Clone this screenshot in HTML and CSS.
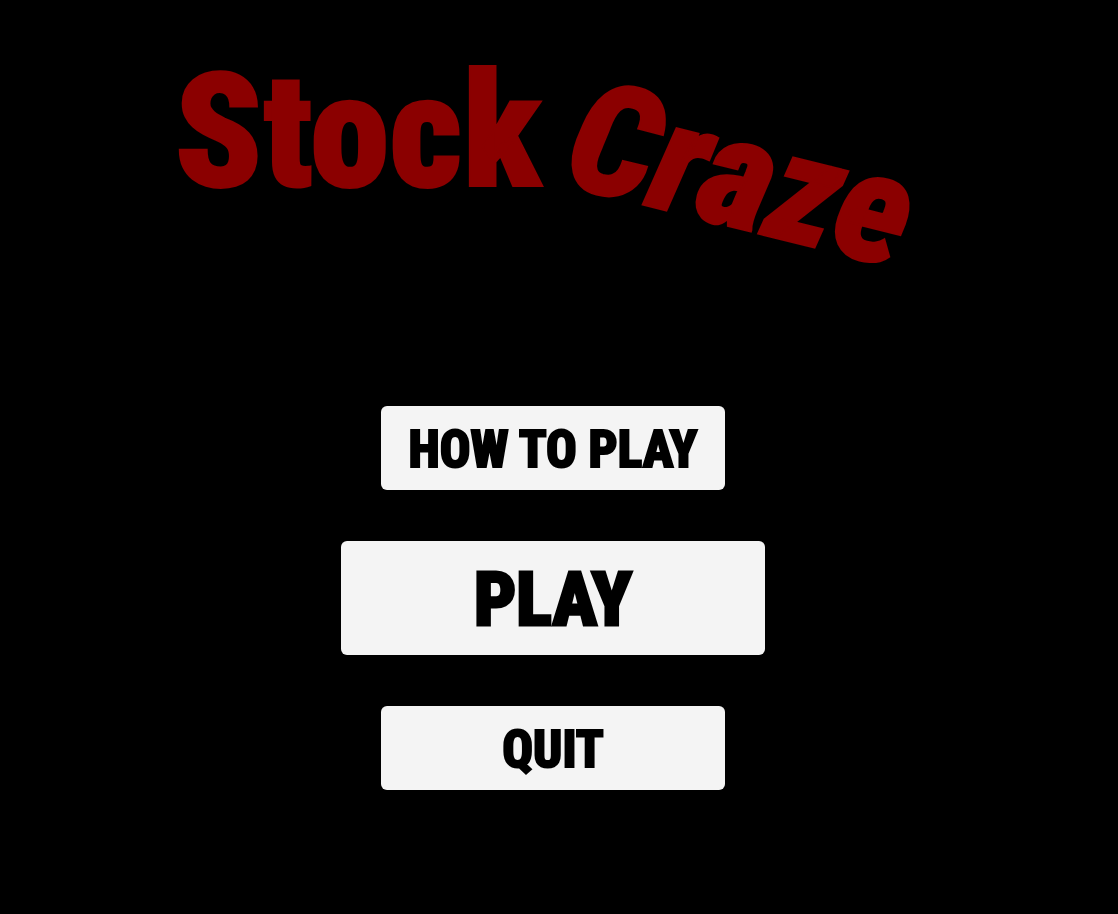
FILE: index.html
```
<!DOCTYPE html>
<html lang="en">
<head>
    <meta charset="UTF-8">
    <meta name="viewport" content="width=device-width, initial-scale=1.0">
    <title>Stock Craze</title>
    <link rel="stylesheet" href="styles.css">
</head>
<body>
    <main class="start-screen">
        <h1 class="title">
            <span class="stock">Stock</span>
            <span class="craze">Craze</span>
        </h1>
        <div class="menu">
            <button type="button" class="menu-button">HOW TO PLAY</button>
            <button type="button" class="menu-button play">PLAY</button>
            <button type="button" class="menu-button">QUIT</button>
        </div>
    </main>
</body>
</html>
```
FILE: styles.css
```
body {
    margin: 0;
    background-color: #000;
    font-family: "Roboto Condensed", "Liberation Sans Narrow", "Liberation Sans", sans-serif;
}

.start-screen {
    display: flex;
    flex-direction: column;
    align-items: center;
    padding: 44px 12px 0 0;
}

.title {
    display: flex;
    justify-content: center;
    gap: 10px;
    margin: 0;
    padding-right: 32px;
    color: #8b0000;
    font-size: 160px;
    font-weight: 900;
    line-height: 176px;
    -webkit-text-stroke: 2px #8b0000;
}

.craze {
    font-size: 156px;
    font-style: italic;
    line-height: 172px;
    transform: rotate(14deg);
    transform-origin: left bottom;
}

.menu {
    display: flex;
    flex-direction: column;
    align-items: center;
    gap: 51px;
    width: 100%;
    margin-top: 186px;
}

.menu-button {
    width: 80%;
    max-width: 344px;
    padding: 14px 0 10px;
    border: none;
    border-radius: 6px;
    background-color: #f4f4f4;
    color: #000;
    font-family: inherit;
    font-size: 51px;
    font-weight: 800;
    line-height: 60px;
    -webkit-text-stroke: 2px #000;
    cursor: pointer;
}

.play {
    max-width: 424px;
    font-size: 74px;
    line-height: 90px;
    -webkit-text-stroke: 3px #000;
}

.menu-button:hover {
    background-color: #ddd;
}
```
